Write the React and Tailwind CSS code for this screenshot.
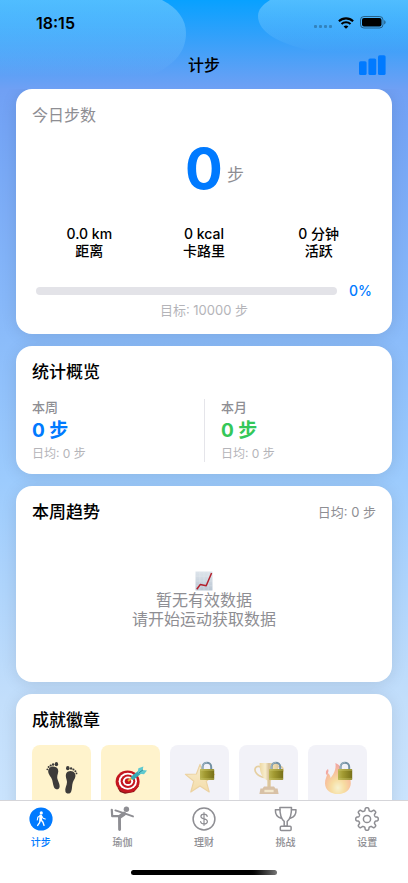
import React from 'react';

const stats = [
  { value: '0.0 km', label: '距离' },
  { value: '0 kcal', label: '卡路里' },
  { value: '0 分钟', label: '活跃' },
];

const badges = [
  { id: 'steps', Icon: Footprints, unlocked: true },
  { id: 'target', Icon: Target, unlocked: true },
  { id: 'star', Icon: Star, unlocked: false },
  { id: 'cup', Icon: GoldCup, unlocked: false },
  { id: 'fire', Icon: Fire, unlocked: false },
];

const tabs = [
  { label: '计步', href: '#steps', Icon: WalkIcon, active: true },
  { label: '瑜伽', href: '#yoga', Icon: YogaIcon },
  { label: '理财', href: '#finance', Icon: DollarIcon },
  { label: '挑战', href: '#challenge', Icon: TrophyIcon },
  { label: '设置', href: '#settings', Icon: GearIcon },
];

/* ---------- Status bar icons ---------- */

function WifiIcon() {
  return (
    <svg width="16" height="12" viewBox="0 0 16 12" fill="none" stroke="#000" strokeWidth="2.1">
      <path d="M0.9 4.2C4.8 0.4 11.2 0.4 15.1 4.2" />
      <path d="M3.5 6.9C6 4.6 10 4.6 12.5 6.9" />
      <path d="M8 11.8L5.6 9.4C7 8.2 9 8.2 10.4 9.4Z" fill="#000" stroke="none" />
    </svg>
  );
}

function BatteryIcon() {
  return (
    <svg width="26" height="13" viewBox="0 0 26 13">
      <rect x="0.5" y="0.5" width="22.5" height="11.5" rx="3.4" fill="none" stroke="#000" strokeOpacity="0.45" />
      <rect x="2" y="2" width="19.5" height="8.5" rx="2" fill="#000" />
      <path d="M24.2 4.2V8.4C25.1 8 25.6 7.2 25.6 6.3S25.1 4.6 24.2 4.2Z" fill="#000" fillOpacity="0.45" />
    </svg>
  );
}

/* ---------- Tab icons ---------- */

function WalkIcon() {
  return (
    <svg width="28" height="26" viewBox="0 0 28 26">
      <circle cx="14" cy="13" r="11.6" fill="#007aff" />
      <circle cx="14.3" cy="6.9" r="1.6" fill="#fff" />
      <g fill="none" stroke="#fff" strokeLinecap="round" strokeLinejoin="round">
        <path d="M13.7 10V14" strokeWidth="2.8" />
        <path d="M13.3 9.6L10.8 11.3L10.3 14" strokeWidth="1.1" />
        <path d="M14.6 9.8L16.1 12.2L18.2 13.1" strokeWidth="1.1" />
        <path d="M13.2 14L12.6 16.6L10.7 19.4" strokeWidth="1.4" />
        <path d="M14.2 14L16 16.3L17 19.4" strokeWidth="1.4" />
      </g>
    </svg>
  );
}

function YogaIcon() {
  return (
    <svg width="28" height="26" viewBox="0 0 28 26" fill="none" stroke="#8e8e93" strokeLinecap="round" strokeLinejoin="round">
      <circle cx="18.4" cy="3.2" r="2.7" fill="#8e8e93" stroke="none" />
      <path d="M7.4 4.4L15 6.8L25 10.4" strokeWidth="1.9" />
      <path d="M3.8 3.8L4.2 10.2L11.4 10.2" strokeWidth="2.2" />
      <path d="M16 7.8L12 10.6" strokeWidth="4.2" />
      <path d="M11.5 11L11.6 23.6" strokeWidth="2.9" />
    </svg>
  );
}

function DollarIcon() {
  return (
    <svg width="28" height="26" viewBox="0 0 28 26" fill="none" stroke="#8e8e93" strokeLinecap="round">
      <circle cx="14" cy="13" r="10.9" strokeWidth="1.5" />
      <path d="M17.2 10.3C17 8.8 15.8 8.1 14 8.1C12.2 8.1 10.9 9 10.9 10.4C10.9 13.6 17.4 11.9 17.4 15.4C17.4 17 16 17.9 14 17.9C12.1 17.9 10.8 17 10.6 15.5M14 6.7V19.3" strokeWidth="1.2" />
    </svg>
  );
}

function TrophyIcon() {
  return (
    <svg width="28" height="26" viewBox="0 0 28 26" fill="none" stroke="#8e8e93" strokeWidth="1.5" strokeLinejoin="round" strokeLinecap="round">
      <path d="M7.9 1.6H19.5C19.6 8.2 18.4 13 15.2 15.3V20.2H12.2V15.3C9 13 7.8 8.2 7.9 1.6Z" />
      <path d="M7.9 3.7H3.4C3.2 8 5.6 11.2 9.2 12.2" />
      <path d="M19.5 3.7H24C24.2 8 21.8 11.2 18.2 12.2" />
      <rect x="8.3" y="20.2" width="10.8" height="4.2" rx="1" />
    </svg>
  );
}

// Eight rounded teeth, sampled around the circle
const gearPath = `M${Array.from({ length: 160 }, (_, i) => {
  const a = (i / 160) * Math.PI * 2;
  const r = 9.8 + 1.45 * Math.tanh(2.4 * Math.cos(8 * a));
  return `${(14 + r * Math.sin(a)).toFixed(2)} ${(13 - r * Math.cos(a)).toFixed(2)}`;
}).join('L')}Z`;

function GearIcon() {
  return (
    <svg width="28" height="26" viewBox="0 0 28 26" fill="none" stroke="#8e8e93" strokeWidth="1.5" strokeLinejoin="round">
      <path d={gearPath} />
      <circle cx="14" cy="13" r="3.6" />
    </svg>
  );
}

/* ---------- Badge drawings ---------- */

function Footprints() {
  return (
    <svg width="32" height="34" viewBox="0 0 32 34" fill="#3d3b3a">
      <path d="M3 7.4C5 4.6 10.6 5 12 8.4C13 11.2 11 13.4 11.2 16.4C11.4 19.4 14.2 22.8 13.6 26C13 29 9.4 29 8 26.2C6.6 23 7 20 5.2 16.8C3.6 14 0.8 10.8 3 7.4Z" />
      <ellipse cx="10.4" cy="3.2" rx="1.7" ry="2.1" />
      <circle cx="7.1" cy="3.5" r="1.2" />
      <circle cx="4.7" cy="4.5" r="1.1" />
      <circle cx="2.6" cy="6.1" r="1" />
      <circle cx="1.3" cy="8.3" r="0.9" />
      <path d="M20.2 12.4C22 9.2 27 9.2 28.8 12.2C30.8 15.8 27.8 18.6 26.8 21.4C25.8 24.4 26.4 27.4 25.2 30.4C24.2 33.2 20.2 33.4 19.4 30.6C18.6 27.6 21 24.2 21 21C21 18 19 15.6 20.2 12.4Z" />
      <ellipse cx="21.8" cy="7.2" rx="1.8" ry="2.1" />
      <circle cx="25.1" cy="7.4" r="1.2" />
      <circle cx="27.4" cy="8.5" r="1.1" />
      <circle cx="29.4" cy="10.2" r="1" />
      <circle cx="30.5" cy="12.4" r="0.9" />
    </svg>
  );
}

function Target() {
  return (
    <svg width="32" height="34" viewBox="0 0 32 34">
      <path d="M2.6 27L5 31L10 32.8L19 31L24 25Z" fill="#7d1717" />
      <ellipse cx="12.6" cy="20.6" rx="12" ry="11" fill="#c4161f" />
      <ellipse cx="12.8" cy="20.2" rx="9.2" ry="8.5" fill="#fff" />
      <ellipse cx="12.9" cy="20.2" rx="7.3" ry="6.7" fill="#c4161f" />
      <ellipse cx="13" cy="20.2" rx="5.2" ry="4.7" fill="#fff" />
      <ellipse cx="13" cy="20.2" rx="3.2" ry="2.9" fill="#c4161f" />
      <path d="M13 20L19 15.4" stroke="#e8b23c" strokeWidth="2" />
      <path d="M18 16.6L25 11" stroke="#36a9b5" strokeWidth="4" strokeLinecap="round" />
      <path d="M22.6 11.2L23.4 7.2L28.4 5.4L27.6 9L32 9.4L29 13.2L24.6 12.8Z" fill="#5fc9cf" />
      <path d="M24 11.8L28 8.8" stroke="#257e90" strokeWidth="0.9" />
    </svg>
  );
}

function Star() {
  return (
    <svg width="32" height="34" viewBox="0 0 32 34">
      <defs>
        <linearGradient id="star" x1="0" y1="0" x2="0" y2="1">
          <stop offset="0" stopColor="#ffe49a" />
          <stop offset="1" stopColor="#f8c54a" />
        </linearGradient>
      </defs>
      <path d="M16 3.4L19.6 13L30.6 13.4L22.2 20.2L25.2 31L16 25L6.8 31L9.8 20.2L1.4 13.4L12.4 13Z" fill="url(#star)" stroke="#e5ad3b" strokeWidth="1.2" strokeLinejoin="round" />
    </svg>
  );
}

function GoldCup() {
  return (
    <svg width="32" height="34" viewBox="0 0 32 34">
      <defs>
        <linearGradient id="cup">
          <stop offset="0" stopColor="#e8b93c" />
          <stop offset="0.3" stopColor="#ffe89a" />
          <stop offset="0.5" stopColor="#b88422" />
          <stop offset="0.7" stopColor="#f3cf5f" />
          <stop offset="1" stopColor="#c9922c" />
        </linearGradient>
      </defs>
      <path d="M8 6C2.6 3.6 0.4 8.4 3.4 12.2C5 14.4 8.4 15.8 11 16.4M24 6C29.4 3.6 31.6 8.4 28.6 12.2C27 14.4 23.6 15.8 21 16.4" fill="none" stroke="#d6a63b" strokeWidth="1.7" />
      <path d="M6.6 2H25.4C25.6 10 23.6 17 17.8 19.4V26H14.2V19.4C8.4 17 6.4 10 6.6 2Z" fill="url(#cup)" />
      <path d="M11 25.4H21L22.4 27.4H24.6L25.6 33H6.4L7.4 27.4H9.6Z" fill="#b98645" />
      <rect x="11.4" y="28.8" width="9.2" height="2.4" fill="#f5dc9a" />
    </svg>
  );
}

function Fire() {
  return (
    <svg width="32" height="34" viewBox="0 0 32 34">
      <defs>
        <radialGradient id="fire" cx="0.5" cy="0.8" r="0.75">
          <stop offset="0" stopColor="#fff3a0" />
          <stop offset="0.35" stopColor="#ffc53a" />
          <stop offset="0.7" stopColor="#ff8330" />
          <stop offset="1" stopColor="#f2503a" />
        </radialGradient>
      </defs>
      <path d="M13.4 2C19 4 20.4 9.6 20 14C22.2 13.4 22.6 10 22 7.6C26 11 29 17 28.8 22.4C28.6 28.8 23 33 16 33C8.6 33 3.2 29 3 22.4C2.8 18.2 5 15.6 5.4 11.8C7.4 13 8.4 15 8.6 17C11.6 13.6 14.4 8 13.4 2Z" fill="url(#fire)" />
      <path d="M6 8C3.6 9.6 3.4 12 4.4 14C6.4 12.2 7 10 6 8Z" fill="#f2503a" />
    </svg>
  );
}

function Lock() {
  return (
    <svg width="16" height="20" viewBox="0 0 16 20">
      <defs>
        <linearGradient id="lock">
          <stop offset="0" stopColor="#b9b451" />
          <stop offset="0.35" stopColor="#a29a31" />
          <stop offset="1" stopColor="#777019" />
        </linearGradient>
      </defs>
      <path d="M3.6 9V6C3.6 0.4 12.2 0.4 12.2 6V9" fill="none" stroke="#7391a3" strokeWidth="2" />
      <path d="M3.3 8V5.8C3.5 2.8 5.6 1.6 7.8 1.5" fill="none" stroke="#adc3cf" strokeWidth="0.8" />
      <rect x="1" y="8" width="14.2" height="11" rx="0.8" fill="url(#lock)" />
      <path d="M1.4 9H15M1.4 18H15" stroke="#d3cf72" strokeWidth="0.7" />
    </svg>
  );
}

function ChartEmoji() {
  return (
    <svg width="18" height="20" viewBox="0 0 18 20">
      <defs>
        <linearGradient id="sheet" x1="0" y1="0" x2="0" y2="1">
          <stop offset="0" stopColor="#dde4eb" />
          <stop offset="1" stopColor="#bac6d3" />
        </linearGradient>
      </defs>
      <rect x="0.5" y="0.5" width="17" height="19" fill="url(#sheet)" />
      <path d="M0.5 5.2H17.5M0.5 10H17.5M0.5 14.8H17.5M4.8 0.5V19.5M9 0.5V19.5M13.2 0.5V19.5" stroke="#eef2f6" strokeOpacity="0.6" strokeWidth="0.5" />
      <path d="M1.8 18.2L5.2 13.6L11.2 14.8L16.6 2" fill="none" stroke="#b3202c" strokeWidth="1.5" strokeLinejoin="round" />
    </svg>
  );
}

/* ---------- Page sections ---------- */

function Card({ className = '', children }) {
  return (
    <section className={`rounded-2xl bg-white px-4 shadow-[0_2px_16px_rgba(0,0,0,0.1)] ${className}`}>
      {children}
    </section>
  );
}

function Header() {
  return (
    <header className="pb-1">
      <div className="flex h-[45px] items-center justify-between pr-[22px] pl-9">
        <span className="text-base font-semibold">18:15</span>
        <div className="flex items-center gap-[6px]">
          <div className="flex gap-[2px] pt-2">
            <span className="size-[3px] rounded-[1px] bg-black/25" />
            <span className="size-[3px] rounded-[1px] bg-black/25" />
            <span className="size-[3px] rounded-[1px] bg-black/25" />
            <span className="size-[3px] rounded-[1px] bg-black/25" />
          </div>
          <WifiIcon />
          <BatteryIcon />
        </div>
      </div>
      <div className="grid h-10 grid-cols-3 items-center px-[22px]">
        <h1 className="col-start-2 text-center text-base font-medium">计步</h1>
        <button type="button" aria-label="统计" className="justify-self-end">
          <svg width="27" height="20" viewBox="0 0 27 20" fill="#007aff">
            <rect x="0" y="6.2" width="7.6" height="13.8" rx="1.6" />
            <rect x="9.4" y="3.4" width="7.8" height="16.6" rx="1.6" />
            <rect x="19" y="0.2" width="7.6" height="19.8" rx="1.6" />
          </svg>
        </button>
      </div>
    </header>
  );
}

function TodayCard() {
  return (
    <Card className="pt-4 pb-[14px]">
      <h2 className="text-base leading-5 text-[#8e8e93]">今日步数</h2>
      <div className="mt-[10px] grid grid-cols-[1fr_auto_1fr] items-end gap-1">
        <span className="col-start-2 text-[56px] leading-[68px] font-bold text-[#007aff]">0</span>
        <span className="pb-4 text-[17px] leading-6 text-[#8e8e93]">步</span>
      </div>
      <div className="mt-[22px] grid grid-cols-3 text-center text-sm leading-[17px] font-medium">
        {stats.map((s) => (
          <div key={s.label}>
            <p>{s.value}</p>
            <p>{s.label}</p>
          </div>
        ))}
      </div>
      <div className="mt-[22px] flex items-center gap-3 px-1">
        <div role="progressbar" aria-label="今日进度" aria-valuenow={0} aria-valuemin={0} aria-valuemax={100} className="h-2 flex-1 rounded-full bg-[#e3e3e8]" />
        <span className="text-sm leading-5 font-medium text-[#007aff]">0%</span>
      </div>
      <p className="text-center text-[13px] leading-[19px] text-[#b4b4b9]">目标: 10000 步</p>
    </Card>
  );
}

function Period({ title, color, className = '' }) {
  return (
    <div className={className}>
      <h3 className="text-[13px] leading-4 font-medium text-[#8e8e93]">{title}</h3>
      <p className={`mt-1 text-[19px] leading-6 font-bold ${color}`}>0 步</p>
      <p className="mt-[3px] text-xs leading-4 text-[#b4b4b9]">日均: 0 步</p>
    </div>
  );
}

function OverviewCard() {
  return (
    <Card className="pt-4 pb-3">
      <h2 className="text-[17px] leading-5 font-medium">统计概览</h2>
      <div className="mt-[17px] grid grid-cols-2">
        <Period title="本周" color="text-[#007aff]" />
        <Period title="本月" color="text-[#34c759]" className="border-l border-[#e5e5ea] pl-4" />
      </div>
    </Card>
  );
}

function TrendCard() {
  return (
    <Card className="pt-4 pb-4">
      <div className="flex items-center justify-between">
        <h2 className="text-[17px] leading-5 font-medium">本周趋势</h2>
        <span className="text-[13px] leading-5 text-[#8e8e93]">日均: 0 步</span>
      </div>
      <div className="flex h-36 flex-col items-center justify-center pt-3 text-center text-base leading-[19px] text-[#8e8e93]">
        <ChartEmoji />
        <p>暂无有效数据</p>
        <p>请开始运动获取数据</p>
      </div>
    </Card>
  );
}

function BadgesCard() {
  return (
    <Card className="pt-4 pb-4">
      <h2 className="text-[17px] leading-5 font-medium">成就徽章</h2>
      <ul className="mt-[15px] flex gap-[10px]">
        {badges.map(({ id, Icon, unlocked }) => (
          <li
            key={id}
            className={`relative flex h-[84px] w-[59px] shrink-0 justify-center rounded-lg pt-4 ${unlocked ? 'bg-[#fff3cc]' : 'bg-[#f2f2f8]'}`}
          >
            <div className={unlocked ? '' : 'opacity-45'}>
              <Icon />
            </div>
            {!unlocked && (
              <span className="absolute top-4 right-[14px]">
                <Lock />
              </span>
            )}
          </li>
        ))}
      </ul>
    </Card>
  );
}

function TabBar() {
  return (
    <nav className="border-t border-[#d5d5d9] bg-white">
      <ul className="flex pt-[5px]">
        {tabs.map(({ label, href, Icon, active }) => (
          <li key={label} className="flex-1">
            <a
              href={href}
              className={`flex flex-col items-center gap-[3px] text-[10px] leading-[14px] font-medium ${active ? 'text-[#007aff]' : 'text-[#8e8e93]'}`}
            >
              <Icon />
              {label}
            </a>
          </li>
        ))}
      </ul>
      <div className="mx-auto mt-[21px] mb-2 h-[5px] w-[36%] rounded-full bg-linear-to-r from-black from-80% to-[#777]" />
    </nav>
  );
}

export default function App() {
  return (
    <div className="relative isolate flex h-screen flex-col overflow-hidden bg-[linear-gradient(#08a1ff_0px,#70a0f4_90px,#8bbcfa_340px,#9ccbfd_480px,#c2defb_700px,#d0e8ff_100%)] font-['Inter','Noto_Sans_CJK_SC',sans-serif] text-black">
      {/* Soft shapes behind the header */}
      <svg className="absolute inset-x-0 top-0 -z-10 h-[90px] w-full" viewBox="0 0 408 90" preserveAspectRatio="none">
        <defs>
          <linearGradient id="glow" gradientUnits="userSpaceOnUse" x1="0" y1="0" x2="0" y2="76">
            <stop offset="0" stopColor="#a5deff" stopOpacity="0.46" />
            <stop offset="1" stopColor="#a5deff" stopOpacity="0" />
          </linearGradient>
          <linearGradient id="glowRight" gradientUnits="userSpaceOnUse" x1="0" y1="0" x2="0" y2="52">
            <stop offset="0" stopColor="#a5deff" stopOpacity="0.46" />
            <stop offset="1" stopColor="#a5deff" stopOpacity="0" />
          </linearGradient>
        </defs>
        <path d="M0 0H162C178 8 186 20 186 33C186 52 174 68 140 80H0Z" fill="url(#glow)" />
        <path d="M408 0H270C262 5 258 10 258 16C258 32 278 44 316 52H408Z" fill="url(#glowRight)" />
      </svg>

      <Header />
      <main className="flex min-h-0 flex-1 flex-col gap-3 overflow-y-auto px-4 [scrollbar-width:none]">
        <TodayCard />
        <OverviewCard />
        <TrendCard />
        <BadgesCard />
      </main>
      <TabBar />
    </div>
  );
}
